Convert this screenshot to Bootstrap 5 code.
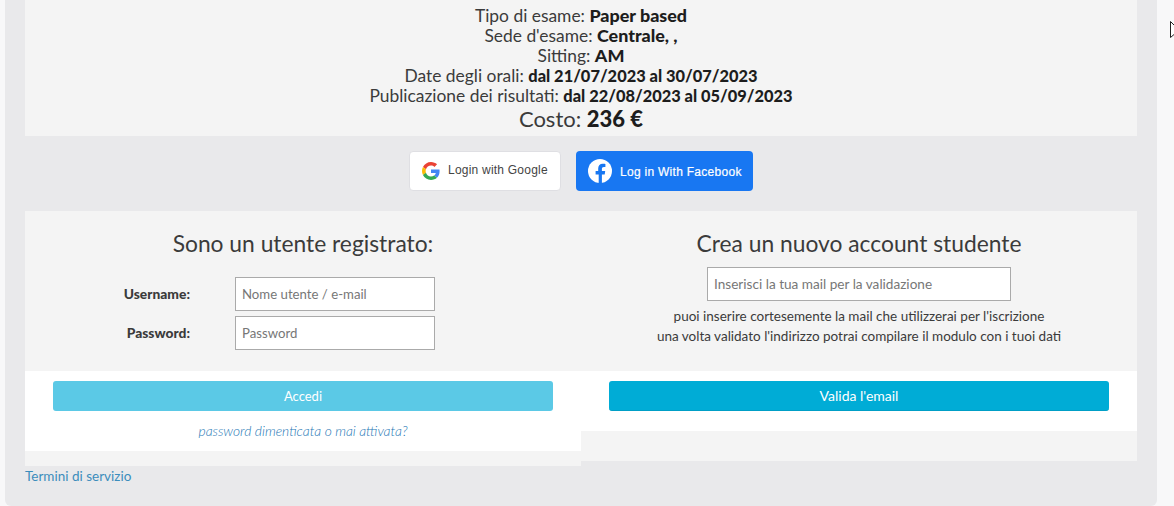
<!DOCTYPE html>
<html lang="it">
<head>
<meta charset="utf-8">
<title>Login</title>
<link href="https://cdn.jsdelivr.net/npm/bootstrap@5.3.0/dist/css/bootstrap.min.css" rel="stylesheet">
<style>
html,body{height:506px;overflow:hidden}
body{background:#f8f8f9;font-family:Lato,"Noto Sans",sans-serif;color:#3b3b3b;position:relative}
.shell{margin:0 17px 0 5px;height:506px;background:#e9e9eb;padding:0 20px;border-radius:0 0 6px 6px}
.summary{height:136px;background:#f4f4f4;text-align:center;font-size:17.4px;line-height:20px;padding-top:6px}
.summary b{color:#1d1d1d;font-weight:900;font-size:17.9px;line-height:1}
.summary b.dates{font-size:16.4px}
.cost{font-size:22px;line-height:26px}
.summary .cost b{font-size:22px}
.social{height:75px;gap:15px;padding-top:15px}
.btn-social{height:40px;font-family:"Liberation Sans",sans-serif;font-size:12px;display:flex;align-items:center;border-radius:4px}
.btn-g{width:152px;background:#fff;border:1px solid #dfdfe3;color:#444;padding-left:12px;gap:8px;letter-spacing:.22px}
.btn-g span{padding-bottom:2px}
.btn-f{width:177px;background:#1877f2;color:#fff;padding-left:12px;gap:8px;letter-spacing:.28px;-webkit-text-stroke:.2px #fff}
.btn-f span{padding-top:2px}
.pane-top{height:160px;background:#f4f4f4;text-align:center}
.pane-title{font-size:22.8px;line-height:26px;font-weight:400;margin:0;padding-top:19px;height:45px;color:#3b3b3b}
.pane-white{background:#fff;padding:10px 28px}
.pane-tail{background:#f4f4f4}
.tail-l{height:15px}
.tail-r{height:30px}
.gap-strip{height:10px}
.action{height:30px;border-radius:3px;color:#fff;font-size:14px;line-height:30px;text-align:center}
.action-off{background:#5bc9e6;font-size:13px}
.action-on{background:#00acd6;border-bottom:1px solid #009fc6}
.forgot{display:block;text-align:center;font-style:italic;font-weight:300;font-size:13.8px;line-height:20px;margin-top:10px;color:#1c76b4;text-decoration:none;height:20px}
.field{height:34px;width:200px;border:1px solid #aaa;border-radius:0;background:#fff;padding:0 6px;font-size:13.2px;color:#333;font-family:inherit}
.field::placeholder{color:#777;opacity:1}
.field-wide{width:304px;font-size:13.6px;margin-top:11px}
.form-line{margin-bottom:5px}
.form-lab{width:165px;margin:0 45px 0 0;text-align:right;font-weight:900;font-size:13.8px}
.login-form{padding-top:21px}
.help-text{font-size:13.5px;line-height:20px;margin:5px 0 0}
.tos{font-size:13.5px;line-height:20px;color:#3c8dbc;text-decoration:none;display:block}
.mouse{position:absolute;left:1170px;top:21px}
</style>
</head>
<body>
<main class="shell">
  <section class="summary">
    <div>Tipo di esame: <b>Paper based</b></div>
    <div>Sede d'esame: <b>Centrale, ,</b></div>
    <div>Sitting: <b>AM</b></div>
    <div>Date degli orali: <b class="dates">dal 21/07/2023 al 30/07/2023</b></div>
    <div>Publicazione dei risultati: <b class="dates">dal 22/08/2023 al 05/09/2023</b></div>
    <div class="cost">Costo: <b>236 €</b></div>
  </section>
  <div class="social d-flex justify-content-center align-items-start">
    <a class="btn-social btn-g text-decoration-none" href="#">
      <svg width="18" height="18" viewBox="0 0 48 48"><path fill="#EA4335" d="M24 9.500c3.500 0 6.700 1.200 9.200 3.600l6.900-6.900C35.900 2.400 30.500 0 24 0 14.600 0 6.500 5.400 2.600 13.200l8 6.200C12.400 13.700 17.700 9.500 24 9.500z"/><path fill="#4285F4" d="M46.900 24.500c0-1.600-.1-3.100-.4-4.500H24v9h12.900c-.6 3-2.200 5.500-4.700 7.200l7.700 6c4.500-4.200 7-10.300 7-17.700z"/><path fill="#FBBC05" d="M10.500 28.600c-.5-1.400-.8-3-.8-4.600s.3-3.200.8-4.600l-8-6.200C.9 16.500 0 20.100 0 24s.9 7.500 2.600 10.800l7.900-6.200z"/><path fill="#34A853" d="M24 48c6.500 0 11.900-2.100 15.900-5.800l-7.700-6c-2.200 1.400-4.900 2.300-8.200 2.300-6.300 0-11.600-4.200-13.500-9.900l-8 6.200C6.500 42.600 14.600 48 24 48z"/></svg>
      <span>Login with Google</span>
    </a>
    <a class="btn-social btn-f text-decoration-none" href="#">
      <svg width="24" height="24" viewBox="0 0 24 24"><circle cx="12" cy="12" r="12" fill="#fff"/><path fill="#1877f2" d="M16.700 15.500l.5-3.500h-3.300V9.800c0-1 .5-1.900 2-1.900h1.500v-3s-1.400-.2-2.700-.2c-2.700 0-4.500 1.700-4.500 4.600V12H7.600v3.500h3.100V24h3.200v-8.500z"/></svg>
      <span>Log in With Facebook</span>
    </a>
  </div>
  <div class="row g-0">
    <div class="col-6">
      <div class="pane-top">
        <h2 class="pane-title">Sono un utente registrato:</h2>
        <form class="login-form">
          <div class="form-line d-flex align-items-center"><label class="form-lab" for="u">Username:</label><input class="field" id="u" placeholder="Nome utente / e-mail"></div>
          <div class="form-line d-flex align-items-center"><label class="form-lab" for="p">Password:</label><input class="field" id="p" placeholder="Password"></div>
        </form>
      </div>
      <div class="pane-white">
        <div class="action action-off">Accedi</div>
        <a class="forgot" href="#">password dimenticata o mai attivata?</a>
      </div>
      <div class="pane-tail tail-l"></div>
    </div>
    <div class="col-6">
      <div class="pane-top">
        <h2 class="pane-title">Crea un nuovo account studente</h2>
        <input class="field field-wide" placeholder="Inserisci la tua mail per la validazione">
        <p class="help-text">puoi inserire cortesemente la mail che utilizzerai per l'iscrizione<br>una volta validato l'indirizzo potrai compilare il modulo con i tuoi dati</p>
      </div>
      <div class="pane-white">
        <div class="action action-on">Valida l'email</div>
        <div class="gap-strip"></div>
      </div>
      <div class="pane-tail tail-r"></div>
    </div>
  </div>
  <a class="tos tos-link" href="#">Termini di servizio</a>
</main>
<svg class="mouse" width="6" height="18" viewBox="0 0 6 18"><path d="M.5 .5V16.500L4 13.500H6M.5 .5L6 6" fill="#fff" stroke="#222"/></svg>
</body>
</html>
